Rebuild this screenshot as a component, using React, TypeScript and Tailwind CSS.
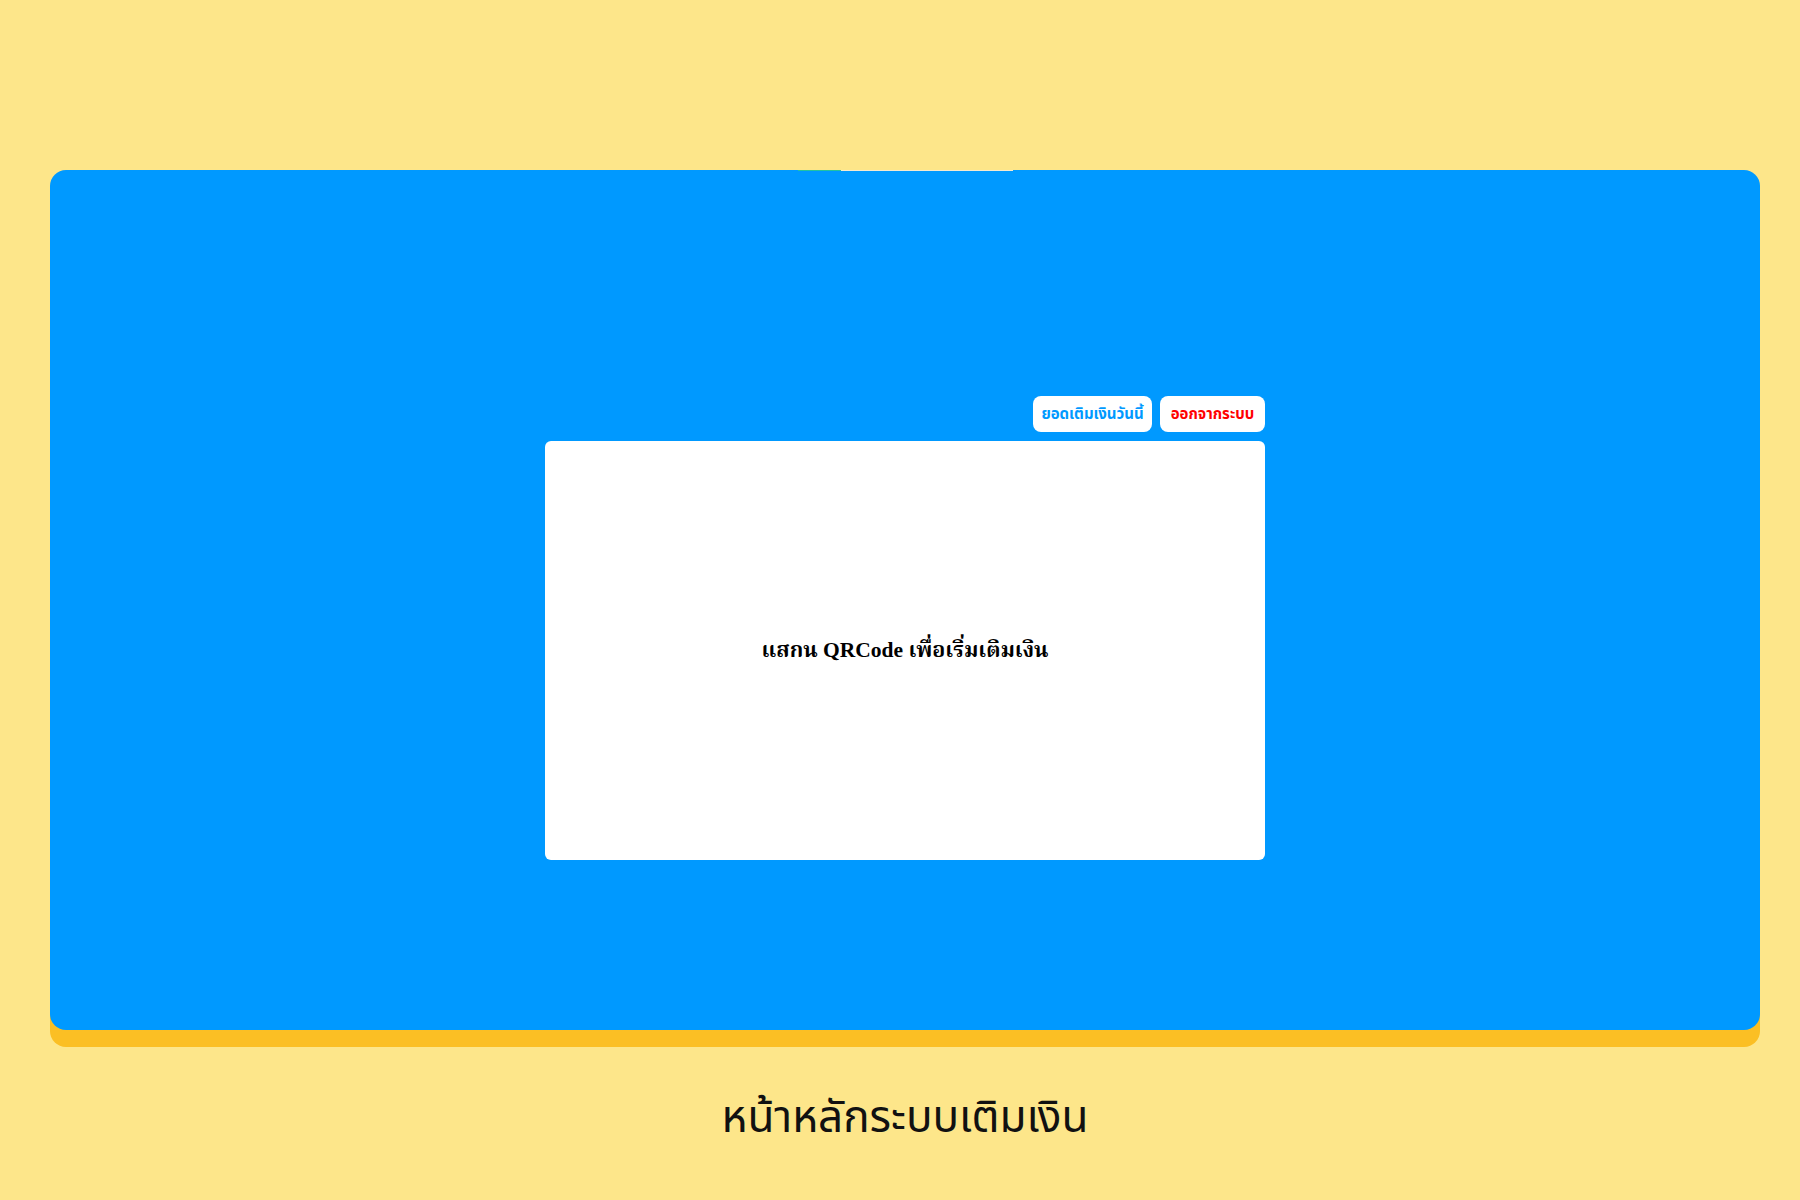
import React from "react";

export default function App() {
  return (
    <div className="min-h-[1200px] w-full bg-[#fde68a] pl-[50px] pr-[40px] pt-[170px]">
      <div className="relative h-[860px] rounded-[16px] bg-[#0099ff] shadow-[0_17px_0_#fbbf24]">
        <div className="absolute left-[748px] top-0 h-px w-[43px] bg-[#22c3a0]" />
        <div className="absolute left-[791px] top-0 h-px w-[172px] bg-[#f5ead0]" />
        <div className="flex flex-col items-center pt-[226px]">
          <div className="w-[720px]">
            <div className="flex justify-end gap-2">
              <button className="h-[36px] w-[119px] rounded-[8px] bg-white text-[15px] font-bold text-[#0099ff] [font-family:Tahoma,'DejaVu_Sans','Noto_Sans_Thai',sans-serif]">
                ยอดเติมเงินวันนี้
              </button>
              <button className="h-[36px] w-[105px] rounded-[8px] bg-white text-[15px] font-bold text-[#ff0000] [font-family:Tahoma,'DejaVu_Sans','Noto_Sans_Thai',sans-serif]">
                ออกจากระบบ
              </button>
            </div>
            <div className="mt-[9px] flex h-[419px] items-center justify-center rounded-[6px] bg-white">
              <span className="text-[21.5px] font-bold text-black [font-family:'Liberation_Serif','Noto_Serif_Thai','Noto_Sans_Thai',serif]">
                แสกน QRCode เพื่อเริ่มเติมเงิน
              </span>
            </div>
          </div>
        </div>
      </div>
      <div className="flex justify-center pt-[56px]">
        <span className="text-[44px] text-[#111] [font-family:'Noto_Sans_Thai','Noto_Sans',sans-serif]">
          หน้าหลักระบบเติมเงิน
        </span>
      </div>
    </div>
  );
}
